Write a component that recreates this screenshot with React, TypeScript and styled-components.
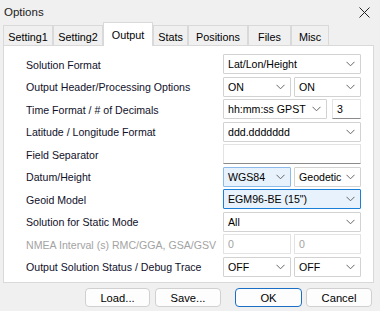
import React from 'react';
import styled, { createGlobalStyle, css } from 'styled-components';

const GlobalStyle = createGlobalStyle`
  html, body {
    margin: 0;
    padding: 0;
    background: #f0f0f0;
  }
  body {
    font-family: 'Liberation Sans', Arial, sans-serif;
    color: #000;
  }
`;

const Window = styled.div`
  width: 380px;
  height: 311px;
  background: #f0f0f0;
  display: flex;
  flex-direction: column;
  overflow: hidden;
`;

const TitleBar = styled.div`
  height: 22px;
  display: flex;
  align-items: center;
  justify-content: space-between;
  padding: 2px 10px 0 4px;
  box-sizing: border-box;
  font-size: 11.5px;
  color: #1a1a1a;
`;

const CloseIcon = () => (
  <svg width="11" height="11" viewBox="0 0 11 11">
    <path d="M0.5 0.5 L10.5 10.5 M10.5 0.5 L0.5 10.5" stroke="#222" strokeWidth="1" />
  </svg>
);

const TabStrip = styled.div`
  height: 23px;
  display: flex;
  align-items: flex-end;
  padding-left: 3px;
  position: relative;
  z-index: 1;
`;

const Tab = styled.div<{ $w: number; $active?: boolean }>`
  width: ${({ $w }) => $w}px;
  height: 20px;
  box-sizing: border-box;
  display: flex;
  align-items: center;
  justify-content: center;
  font-size: 10.8px;
  color: #000;
  background: #f0f0f0;
  border: 1px solid #d9d9d9;
  border-bottom: none;
  padding-top: 2px;
  ${({ $active }) =>
    $active &&
    css`
      height: 24px;
      margin-bottom: -1px;
      background: #fff;
      padding-top: 0;
    `}
`;

const Panel = styled.div`
  margin: 0 6px 0 3px;
  height: 238px;
  box-sizing: border-box;
  background: #fff;
  border: 1px solid #d9d9d9;
  padding: 8px 12px 0 22px;
`;

const Form = styled.div`
  display: grid;
  grid-template-columns: 1fr 138px;
  grid-auto-rows: 20px;
  row-gap: 2.5px;
`;

const Label = styled.div<{ $disabled?: boolean }>`
  display: flex;
  align-items: center;
  padding-top: 1px;
  font-size: 10.6px;
  white-space: nowrap;
  color: ${({ $disabled }) => ($disabled ? '#a3a3a3' : '#10102a')};
`;

const Pair = styled.div<{ $cols: string; $gap: number }>`
  display: grid;
  grid-template-columns: ${({ $cols }) => $cols};
  column-gap: ${({ $gap }) => $gap}px;
`;

const ComboBox = styled.div<{ $hl?: 'soft' | 'strong' }>`
  height: 20px;
  box-sizing: border-box;
  display: flex;
  align-items: center;
  justify-content: space-between;
  gap: 2px;
  padding: 0 5px 0 4px;
  font-size: 10.6px;
  background: #fff;
  border: 1px solid #d2d2d2;
  border-radius: 1px;
  overflow: hidden;
  white-space: nowrap;
  svg {
    flex-shrink: 0;
  }
  ${({ $hl }) =>
    $hl === 'soft' &&
    css`
      background: #e8f2fc;
      border-color: #8bbbe8;
    `}
  ${({ $hl }) =>
    $hl === 'strong' &&
    css`
      background: #e8f2fc;
      border-color: #1a7fd6;
    `}
`;

const Chevron = () => (
  <svg width="9" height="6" viewBox="0 0 9 6">
    <path d="M0.5 0.8 L4.5 4.8 L8.5 0.8" fill="none" stroke="#666" strokeWidth="1" />
  </svg>
);

const TextBox = styled.div<{ $disabled?: boolean }>`
  height: 20px;
  box-sizing: border-box;
  display: flex;
  align-items: center;
  padding: 0 4px;
  font-size: 10.6px;
  background: #fff;
  border: 1px solid #e3e3e3;
  border-bottom-color: ${({ $disabled }) => ($disabled ? '#e3e3e3' : '#8a8a8a')};
  color: ${({ $disabled }) => ($disabled ? '#a3a3a3' : '#000')};
`;

const Footer = styled.div`
  flex: 1;
  display: flex;
  align-items: flex-start;
  padding: 5px 0 0 85px;
`;

const Button = styled.div<{ $w: number; $gap: number; $default?: boolean }>`
  width: ${({ $w }) => $w}px;
  margin-right: ${({ $gap }) => $gap}px;
  height: 19px;
  box-sizing: border-box;
  display: flex;
  align-items: center;
  justify-content: center;
  font-size: 11.2px;
  background: #fdfdfd;
  border: 1px solid ${({ $default }) => ($default ? '#1a6fc4' : '#d0d0d0')};
  border-radius: 4px;
  color: #000;
`;

const Combo = ({ value, hl }: { value: string; hl?: 'soft' | 'strong' }) => (
  <ComboBox $hl={hl}>
    <span>{value}</span>
    <Chevron />
  </ComboBox>
);

const tabs = [
  { name: 'Setting1', w: 50 },
  { name: 'Setting2', w: 50 },
  { name: 'Output', w: 50, active: true },
  { name: 'Stats', w: 35 },
  { name: 'Positions', w: 60 },
  { name: 'Files', w: 43 },
  { name: 'Misc', w: 38 },
];

export default function App() {
  return (
    <Window>
      <GlobalStyle />
      <TitleBar>
        <span>Options</span>
        <CloseIcon />
      </TitleBar>
      <TabStrip>
        {tabs.map((t) => (
          <Tab key={t.name} $w={t.w} $active={t.active}>
            {t.name}
          </Tab>
        ))}
      </TabStrip>
      <Panel>
        <Form>
          <Label>Solution Format</Label>
          <Combo value="Lat/Lon/Height" />

          <Label>Output Header/Processing Options</Label>
          <Pair $cols="68px 67px" $gap={3}>
            <Combo value="ON" />
            <Combo value="ON" />
          </Pair>

          <Label>Time Format / # of Decimals</Label>
          <Pair $cols="104px 29px" $gap={5}>
            <Combo value="hh:mm:ss GPST" />
            <TextBox>3</TextBox>
          </Pair>

          <Label>Latitude / Longitude Format</Label>
          <Combo value="ddd.ddddddd" />

          <Label>Field Separator</Label>
          <TextBox />

          <Label>Datum/Height</Label>
          <Pair $cols="68px 67px" $gap={3}>
            <Combo value="WGS84" hl="soft" />
            <Combo value="Geodetic" />
          </Pair>

          <Label>Geoid Model</Label>
          <Combo value={'EGM96-BE (15")'} hl="strong" />

          <Label>Solution for Static Mode</Label>
          <Combo value="All" />

          <Label $disabled>NMEA Interval (s) RMC/GGA, GSA/GSV</Label>
          <Pair $cols="68px 67px" $gap={3}>
            <TextBox $disabled>0</TextBox>
            <TextBox $disabled>0</TextBox>
          </Pair>

          <Label>Output Solution Status / Debug Trace</Label>
          <Pair $cols="68px 67px" $gap={3}>
            <Combo value="OFF" />
            <Combo value="OFF" />
          </Pair>
        </Form>
      </Panel>
      <Footer>
        <Button $w={65} $gap={5}>Load...</Button>
        <Button $w={66} $gap={14}>Save...</Button>
        <Button $w={67} $gap={4} $default>OK</Button>
        <Button $w={66} $gap={0}>Cancel</Button>
      </Footer>
    </Window>
  );
}
